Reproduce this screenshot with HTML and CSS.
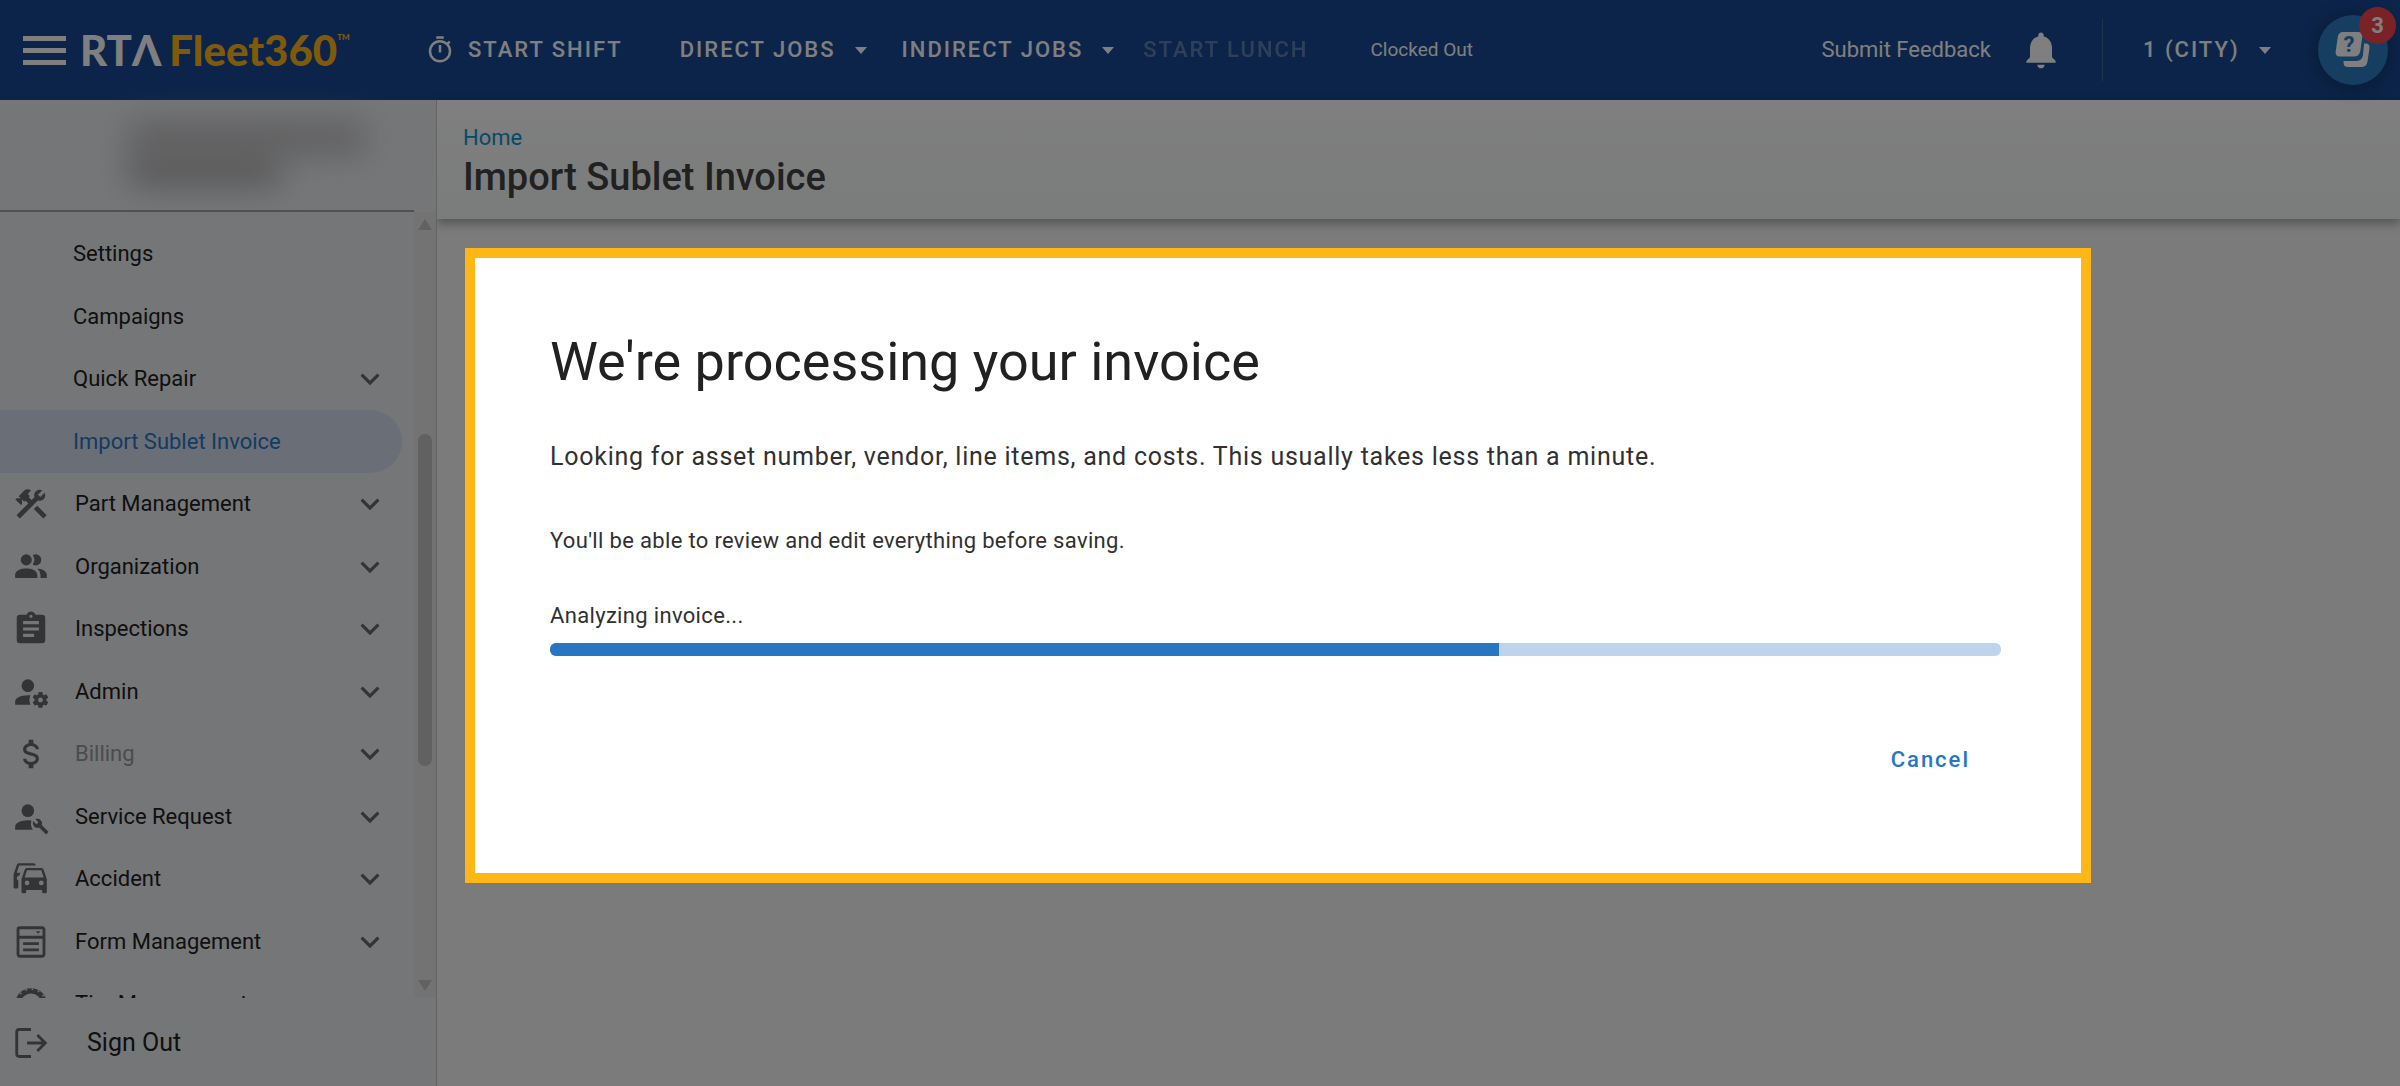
FILE: index.html
```html
<!DOCTYPE html>
<html lang="en">
<head>
  <meta charset="UTF-8">
  <meta name="viewport" content="width=device-width, initial-scale=1.0">
  <title>Import Sublet Invoice - RTA Fleet360</title>
  <link rel="stylesheet" href="styles.css">
</head>
<body>
  <!-- shared icons -->
  <svg class="sprite" width="0" height="0" aria-hidden="true">
    <symbol id="chevron" viewBox="0 0 24 24"><path d="M7.41 8.58L12 13.17l4.59-4.59L18 10l-6 6-6-6z"/></symbol>
    <symbol id="caret" viewBox="0 0 12 7"><path d="M0 0h12L6 7z"/></symbol>
  </svg>

  <header class="topbar">
    <button class="menu-btn" type="button" aria-label="Toggle menu"><span></span><span></span><span></span></button>
    <a class="logo" href="#"><span class="logo-rta">RTΛ</span><span class="logo-fleet">Fleet360</span><sup class="logo-tm">TM</sup></a>

    <nav class="shift-nav">
      <button class="top-btn shift-btn" type="button">
        <svg class="timer-icon" viewBox="0 0 24 24"><path d="M12 20A7 7 0 0 1 5 13A7 7 0 0 1 12 6A7 7 0 0 1 19 13A7 7 0 0 1 12 20M19.03 7.39L20.45 5.97C20 5.46 19.55 5 19.04 4.56L17.62 6C16.07 4.74 14.12 4 12 4A9 9 0 0 0 3 13A9 9 0 0 0 12 22C17 22 21 17.97 21 13C21 10.88 20.26 8.93 19.03 7.39M11 14H13V8H11M15 1H9V3H15V1Z"/></svg>
        START SHIFT
      </button>
      <button class="top-btn" type="button" aria-haspopup="menu">DIRECT JOBS <svg class="caret"><use href="#caret"/></svg></button>
      <button class="top-btn" type="button" aria-haspopup="menu">INDIRECT JOBS <svg class="caret"><use href="#caret"/></svg></button>
      <button class="top-btn" type="button" disabled>START LUNCH</button>
      <span class="clock-status">Clocked Out</span>
    </nav>

    <div class="top-right">
      <a class="feedback" href="#">Submit Feedback</a>
      <button class="bell-btn" type="button" aria-label="Notifications">
        <svg viewBox="0 0 24 24"><path d="M12 22c1.1 0 2-.9 2-2h-4c0 1.1.89 2 2 2zm6-6v-5c0-3.07-1.64-5.64-4.5-6.32V4c0-.83-.67-1.5-1.5-1.5s-1.5.67-1.5 1.5v.68C7.63 5.36 6 7.92 6 11v5l-2 2v1h16v-1l-2-2z"/></svg>
      </button>
      <div class="facility">
        <select class="facility-select" aria-label="Facility"><option>1 (CITY)</option></select>
        <svg class="caret"><use href="#caret"/></svg>
      </div>
      <button class="help-btn" type="button" aria-label="Help, 3 new">
        <svg viewBox="0 0 36 36">
          <path d="M29 11.5h1.5q4.5 0 4 4.5l-2 13.5q-.8 5.5-6.5 5.5H13q-4.5 0-4.5-4.5V29H21q6 0 7-6z"/>
          <path d="M8 0h15q5 0 4.3 5l-2 14q-.8 5.5-6.5 5.5H5q-5 0-4.3-5l2-14Q3.5 0 8 0z"/>
          <text class="help-mark" x="14" y="20" text-anchor="middle">?</text>
        </svg>
        <span class="help-count">3</span>
      </button>
    </div>
  </header>

  <div class="layout">
    <aside class="sidebar">
      <div class="account">
        <div class="account-line account-line-long"></div>
        <div class="account-line"></div>
      </div>

      <div class="nav-scroll">
        <nav class="side-nav">
          <a class="nav-item sub" href="#">Settings</a>
          <a class="nav-item sub" href="#">Campaigns</a>
          <a class="nav-item sub" href="#">Quick Repair <svg class="chevron"><use href="#chevron"/></svg></a>
          <a class="nav-item sub active" href="#" aria-current="page">Import Sublet Invoice</a>
          <a class="nav-item" href="#">
            <svg class="nav-icon" viewBox="0 0 24 24"><path d="M13.78 15.17l2.12-2.12 6 6-2.12 2.12z"/><path d="M17.5 10c1.93 0 3.5-1.57 3.5-3.5 0-.58-.16-1.12-.41-1.6l-2.7 2.7-1.49-1.49 2.7-2.7c-.48-.25-1.02-.41-1.6-.41C15.57 3 14 4.57 14 6.5c0 .41.08.8.21 1.16l-1.85 1.85-1.78-1.78.71-.71-1.41-1.41L12 3.49a3 3 0 0 0-4.24 0L4.22 7.03l1.41 1.41H2.81l-.71.71 3.54 3.54.71-.71V9.15l1.41 1.41.71-.71 1.78 1.78-7.41 7.41 2.12 2.12L16.34 9.79c.36.13.75.21 1.16.21z"/></svg>
            Part Management <svg class="chevron"><use href="#chevron"/></svg>
          </a>
          <a class="nav-item" href="#">
            <svg class="nav-icon" viewBox="0 0 24 24"><path d="M13.07 10.41A5 5 0 0 0 13.07 4.59A3.39 3.39 0 0 1 15 4A3.5 3.5 0 0 1 15 11A3.39 3.39 0 0 1 13.07 10.41M5.5 7.5A3.5 3.5 0 1 1 9 11A3.5 3.5 0 0 1 5.5 7.5M16 17V19H2V17S2 13 9 13 16 17 16 17M15.95 13A5.32 5.32 0 0 1 18 17V19H22V17S22 13.37 15.94 13Z"/></svg>
            Organization <svg class="chevron"><use href="#chevron"/></svg>
          </a>
          <a class="nav-item" href="#">
            <svg class="nav-icon" viewBox="0 0 24 24"><path d="M17 9H7V7H17M17 13H7V11H17M14 17H7V15H14M12 3A1 1 0 0 1 13 4A1 1 0 0 1 12 5A1 1 0 0 1 11 4A1 1 0 0 1 12 3M19 3H14.82C14.4 1.84 13.3 1 12 1C10.7 1 9.6 1.84 9.18 3H5A2 2 0 0 0 3 5V19A2 2 0 0 0 5 21H19A2 2 0 0 0 21 19V5A2 2 0 0 0 19 3Z"/></svg>
            Inspections <svg class="chevron"><use href="#chevron"/></svg>
          </a>
          <a class="nav-item" href="#">
            <svg class="nav-icon" viewBox="0 0 24 24"><path d="M10 4A4 4 0 0 0 6 8A4 4 0 0 0 10 12A4 4 0 0 0 14 8A4 4 0 0 0 10 4M17 12C16.87 12 16.76 12.09 16.74 12.21L16.55 13.53C16.25 13.66 15.96 13.82 15.7 14L14.46 13.5C14.35 13.5 14.22 13.5 14.15 13.63L13.15 15.36C13.09 15.47 13.11 15.6 13.21 15.68L14.27 16.5C14.25 16.67 14.24 16.83 14.24 17C14.24 17.17 14.25 17.33 14.27 17.5L13.21 18.32C13.12 18.4 13.09 18.53 13.15 18.64L14.15 20.37C14.21 20.5 14.34 20.5 14.46 20.5L15.7 20C15.96 20.18 16.24 20.35 16.55 20.47L16.74 21.79C16.76 21.91 16.86 22 17 22H19C19.11 22 19.22 21.91 19.24 21.79L19.43 20.47C19.73 20.34 20 20.18 20.27 20L21.5 20.5C21.63 20.5 21.76 20.5 21.83 20.37L22.83 18.64C22.89 18.53 22.86 18.4 22.77 18.32L21.7 17.5C21.72 17.33 21.74 17.17 21.74 17C21.74 16.83 21.73 16.67 21.7 16.5L22.76 15.68C22.85 15.6 22.88 15.47 22.82 15.36L21.82 13.63C21.76 13.5 21.63 13.5 21.5 13.5L20.27 14C20 13.82 19.73 13.65 19.42 13.53L19.23 12.21C19.22 12.09 19.11 12 19 12H17M10 14C5.58 14 2 15.79 2 18V20H11.68A7 7 0 0 1 11 17A7 7 0 0 1 11.64 14.09C11.11 14.03 10.56 14 10 14M18 15.5C18.83 15.5 19.5 16.17 19.5 17C19.5 17.83 18.83 18.5 18 18.5C17.16 18.5 16.5 17.83 16.5 17C16.5 16.17 17.17 15.5 18 15.5Z"/></svg>
            Admin <svg class="chevron"><use href="#chevron"/></svg>
          </a>
          <a class="nav-item locked" href="#">
            <svg class="nav-icon" viewBox="0 0 24 24"><path d="M7 15H9C9 16.08 10.37 17 12 17C13.63 17 15 16.08 15 15C15 13.9 13.96 13.5 11.76 12.97C9.64 12.44 7 11.78 7 9C7 7.21 8.47 5.69 10.5 5.18V3H13.5V5.18C15.53 5.69 17 7.21 17 9H15C15 7.92 13.63 7 12 7C10.37 7 9 7.92 9 9C9 10.1 10.04 10.5 12.24 11.03C14.36 11.56 17 12.22 17 15C17 16.79 15.53 18.31 13.5 18.82V21H10.5V18.82C8.47 18.31 7 16.79 7 15Z"/></svg>
            Billing <svg class="chevron"><use href="#chevron"/></svg>
          </a>
          <a class="nav-item" href="#">
            <svg class="nav-icon" viewBox="0 0 24 24"><circle cx="10" cy="8" r="4"/><path d="M10 14C5.58 14 2 15.79 2 18V20H13.1C12 18.3 11.6 16.2 12.3 14.2C11.5 14.06 10.8 14 10 14Z"/><path d="M22.9 21.2L18.8 17.1c.4-1 .2-2.3-.7-3.1-.9-.9-2.2-1.1-3.3-.6l1.9 1.9-1.3 1.3-2-1.9c-.5 1.1-.2 2.4.6 3.3.9.9 2.1 1.1 3.1.7l4.1 4.1c.2.2.5.2.6 0l1-1c.3-.1.3-.4.1-.6z"/></svg>
            Service Request <svg class="chevron"><use href="#chevron"/></svg>
          </a>
          <a class="nav-item" href="#">
            <svg class="nav-icon" viewBox="0 0 24 24"><path d="M8 11L9.5 6.5H18.5L20 11M18.5 16A1.5 1.5 0 0 1 17 14.5A1.5 1.5 0 0 1 18.5 13A1.5 1.5 0 0 1 20 14.5A1.5 1.5 0 0 1 18.5 16M9.5 16A1.5 1.5 0 0 1 8 14.5A1.5 1.5 0 0 1 9.5 13A1.5 1.5 0 0 1 11 14.5A1.5 1.5 0 0 1 9.5 16M19.92 6C19.71 5.4 19.14 5 18.5 5H9.5C8.86 5 8.29 5.4 8.08 6L6 12V20A1 1 0 0 0 7 21H8A1 1 0 0 0 9 20V19H19V20A1 1 0 0 0 20 21H21A1 1 0 0 0 22 20V12L19.92 6M14.92 3C14.71 2.4 14.14 2 13.5 2H4.5C3.86 2 3.29 2.4 3.08 3L1 9V17A1 1 0 0 0 2 18H3A1 1 0 0 0 4 17V12.91C3.22 12.63 2.82 11.77 3.1 11C3.32 10.4 3.87 10 4.5 10H4.57L5.27 8H3L4.5 3.5H15.09L14.92 3Z"/></svg>
            Accident <svg class="chevron"><use href="#chevron"/></svg>
          </a>
          <a class="nav-item" href="#">
            <svg class="nav-icon" viewBox="0 0 24 24"><path class="line" d="M5 3h14a1.2 1.2 0 0 1 1.2 1.2v15.6A1.2 1.2 0 0 1 19 21H5a1.2 1.2 0 0 1-1.2-1.2V4.2A1.2 1.2 0 0 1 5 3zM3.8 9h16.4M7 13h10M7 17h10"/><path d="M15 5.2h3l-1.5 1.6z"/></svg>
            Form Management <svg class="chevron"><use href="#chevron"/></svg>
          </a>
          <a class="nav-item" href="#">
            <svg class="nav-icon" viewBox="0 0 24 24"><circle class="tire" cx="12" cy="12" r="8.3"/><circle class="tread" cx="12" cy="12" r="9.3"/></svg>
            Tire Management <svg class="chevron"><use href="#chevron"/></svg>
          </a>
        </nav>
        <div class="scrollbar" aria-hidden="true">
          <svg class="scroll-arrow" viewBox="0 0 16 13"><path d="M8 1l7 11H1z"/></svg>
          <div class="scroll-track"><div class="scroll-thumb"></div></div>
          <svg class="scroll-arrow" viewBox="0 0 16 13"><path d="M8 12l7-11H1z"/></svg>
        </div>
      </div>

      <a class="sign-out" href="#">
        <svg class="nav-icon" viewBox="0 0 24 24"><path class="line" d="M12 3.5H4.5A1.5 1.5 0 0 0 3 5v14a1.5 1.5 0 0 0 1.5 1.5H12M9.5 12h11M16 7l5 5-5 5"/></svg>
        Sign Out
      </a>
    </aside>

    <main class="content">
      <div class="page-head">
        <a class="crumb" href="#">Home</a>
        <h1 class="page-title">Import Sublet Invoice</h1>
      </div>

      <section class="dialog" role="dialog" aria-modal="true" aria-labelledby="dialog-title">
        <h2 class="dialog-title" id="dialog-title">We're processing your invoice</h2>
        <p class="lead">Looking for asset number, vendor, line items, and costs. This usually takes less than a minute.</p>
        <p class="note">You'll be able to review and edit everything before saving.</p>
        <label class="progress-label" for="progress">Analyzing invoice...</label>
        <progress class="progress" id="progress" value="65.4" max="100"></progress>
        <div class="actions"><button class="cancel-btn" type="button">Cancel</button></div>
      </section>
    </main>
  </div>

  <div class="backdrop"></div>
</body>
</html>
```
FILE: styles.css
```css
* {
  box-sizing: border-box;
}

body {
  margin: 0;
  height: 100vh;
  display: flex;
  flex-direction: column;
  overflow: hidden;
  background: #f6f6f6;
  color: #212121;
  font: 22px/30px Roboto, sans-serif;
}

a {
  color: inherit;
  text-decoration: none;
}

button,
select {
  padding: 0;
  border: 0;
  background: none;
  color: inherit;
  font: inherit;
}

svg {
  flex: none;
  fill: currentColor;
}

.sprite {
  position: absolute;
}

/* top bar */
.topbar {
  display: flex;
  align-items: center;
  flex: none;
  height: 100px;
  padding: 0 12px 0 23px;
  background: #184892;
  color: #fff;
}

.menu-btn {
  display: flex;
  flex-direction: column;
  gap: 7px;
  width: 43px;
}

.menu-btn span {
  height: 5px;
  background: #fff;
}

.logo {
  display: flex;
  align-items: center;
  width: 359px;
  padding-left: 14px;
  font: 900 42px/48px Lato, sans-serif;
}

.logo-fleet {
  margin-left: 8px;
  color: #ffb414;
}

.logo-tm {
  align-self: flex-start;
  color: #ffb414;
  font-size: 8px;
  line-height: 22px;
}

.shift-nav {
  display: flex;
  align-items: center;
}

.top-btn {
  display: flex;
  align-items: center;
  margin-right: 35px;
  font-weight: 500;
  letter-spacing: 2px;
}

.top-btn:disabled {
  margin: 0 62px 0 -6px;
  opacity: .3;
}

.shift-btn {
  margin-right: 57px;
}

.timer-icon {
  width: 30px;
  height: 30px;
  margin-right: 13px;
}

.caret {
  width: 12px;
  height: 7px;
  margin-left: 19px;
}

.clock-status {
  font-size: 19px;
}

.top-right {
  display: flex;
  align-items: center;
  margin-left: auto;
}

.bell-btn {
  display: flex;
  margin: 0 39px 0 28px;
}

.bell-btn svg {
  width: 44px;
  height: 44px;
}

.facility {
  display: flex;
  align-items: center;
  height: 62px;
  margin-right: 47px;
  padding-left: 40px;
  border-left: 1px solid #3f669c;
}

.facility-select {
  appearance: none;
  font-weight: 500;
  letter-spacing: 2px;
}

.help-btn {
  position: relative;
  display: grid;
  place-items: center;
  width: 70px;
  height: 70px;
  border-radius: 50%;
  background: #2c7cc0;
  box-shadow: 0 2px 20px rgba(0, 0, 0, .3);
}

.help-btn svg {
  width: 36px;
  height: 36px;
}

.help-mark {
  fill: #2c7cc0;
  font: 700 22px Roboto, sans-serif;
}

.help-count {
  position: absolute;
  top: -8px;
  right: -8px;
  width: 37px;
  height: 37px;
  border-radius: 50%;
  background: #f5464c;
  font-weight: 700;
  line-height: 37px;
}

/* sidebar */
.layout {
  display: flex;
  flex: 1;
  min-height: 0;
}

.sidebar {
  position: relative;
  z-index: 1;
  display: flex;
  flex-direction: column;
  flex: none;
  width: 437px;
  border-right: 1px solid #c8c8c8;
  background: #ebedf0;
}

.account {
  flex: none;
  width: 414px;
  height: 112px;
  padding: 22px 0 0 130px;
  border-bottom: 2px solid #a0a2a6;
}

.account-line {
  width: 150px;
  height: 32px;
  background: #b0b0b2;
  filter: blur(16px);
}

.account-line-long {
  width: 235px;
  background: #bebec0;
}

.nav-scroll {
  display: flex;
  flex: 1;
  min-height: 0;
  overflow: hidden;
}

.side-nav {
  flex: 1;
  padding: 11px 12px 0 0;
}

.nav-item {
  display: flex;
  align-items: center;
  height: 62px;
  padding: 0 13px 0 12px;
}

.nav-item:nth-child(even) {
  height: 63px;
}

.nav-item.sub {
  padding-left: 73px;
}

.nav-item.active {
  border-radius: 0 32px 32px 0;
  background: #d4dded;
  color: #2876c2;
}

.nav-item.locked {
  color: #96989c;
}

.nav-icon {
  width: 38px;
  height: 38px;
  margin-right: 25px;
  color: #66686c;
}

.line {
  fill: none;
  stroke: currentColor;
  stroke-width: 1.8;
}

.tire {
  fill: none;
  stroke: currentColor;
  stroke-width: 3.4;
}

.tread {
  fill: none;
  stroke: #ebedf0;
  stroke-width: 1;
  stroke-dasharray: 1 3;
}

.chevron {
  width: 38px;
  height: 38px;
  margin-left: auto;
  color: #66686c;
}

.scrollbar {
  display: flex;
  flex-direction: column;
  align-items: center;
  width: 22px;
  padding: 6px 0;
  background: #e6e6e6;
  color: #c4c4c4;
}

.scroll-arrow {
  width: 16px;
  height: 13px;
}

.scroll-track {
  flex: 1;
  padding-top: 203px;
}

.scroll-thumb {
  width: 14px;
  height: 332px;
  border-radius: 7px;
  background: #c2c2c2;
}

.sign-out {
  display: flex;
  align-items: center;
  flex: none;
  height: 88px;
  padding: 2px 0 0 12px;
  font-size: 25px;
}

.sign-out .nav-icon {
  margin-right: 37px;
}

/* page */
.content {
  flex: 1;
  min-width: 0;
}

.page-head {
  height: 119px;
  padding: 23px 26px;
  background: linear-gradient(#fff, #f5f7f7);
  box-shadow: 0 4px 10px rgba(0, 0, 0, .35);
}

.crumb {
  display: block;
  color: #0f95cf;
}

.page-title {
  margin: 0;
  color: #424242;
  font-size: 38px;
  font-weight: 500;
  line-height: 48px;
}

.dialog {
  position: relative;
  z-index: 3;
  max-width: 1626px;
  margin: 29px 28px;
  padding: 73px 80px 85px 75px;
  border: 10px solid #ffb716;
  background: #fff;
}

.dialog-title {
  margin: 0 0 48px;
  font-size: 54px;
  font-weight: 400;
  line-height: 62px;
}

.lead,
.note,
.progress-label {
  color: #303030;
}

.lead {
  margin: 0 0 53px;
  font-size: 25px;
  line-height: 32px;
  letter-spacing: .03em;
}

.note {
  margin: 0 0 45px;
  letter-spacing: .015em;
}

.progress-label {
  display: block;
  margin-bottom: 12px;
  letter-spacing: .015em;
}

.progress {
  display: block;
  appearance: none;
  width: 100%;
  height: 13px;
  border: 0;
  border-radius: 6px;
  background: #bed4eb;
  overflow: hidden;
}

.progress::-webkit-progress-bar {
  background: #bed4eb;
}

.progress::-webkit-progress-value {
  background: #2876c2;
}

.actions {
  display: flex;
  justify-content: flex-end;
  margin-top: 76px;
}

.cancel-btn {
  height: 56px;
  padding: 0 31px;
  color: #2876c2;
  font-weight: 500;
  letter-spacing: 2px;
}

/* dims everything but the dialog */
.backdrop {
  position: fixed;
  inset: 0;
  z-index: 2;
  background: rgba(0, 0, 0, .5);
}
```
